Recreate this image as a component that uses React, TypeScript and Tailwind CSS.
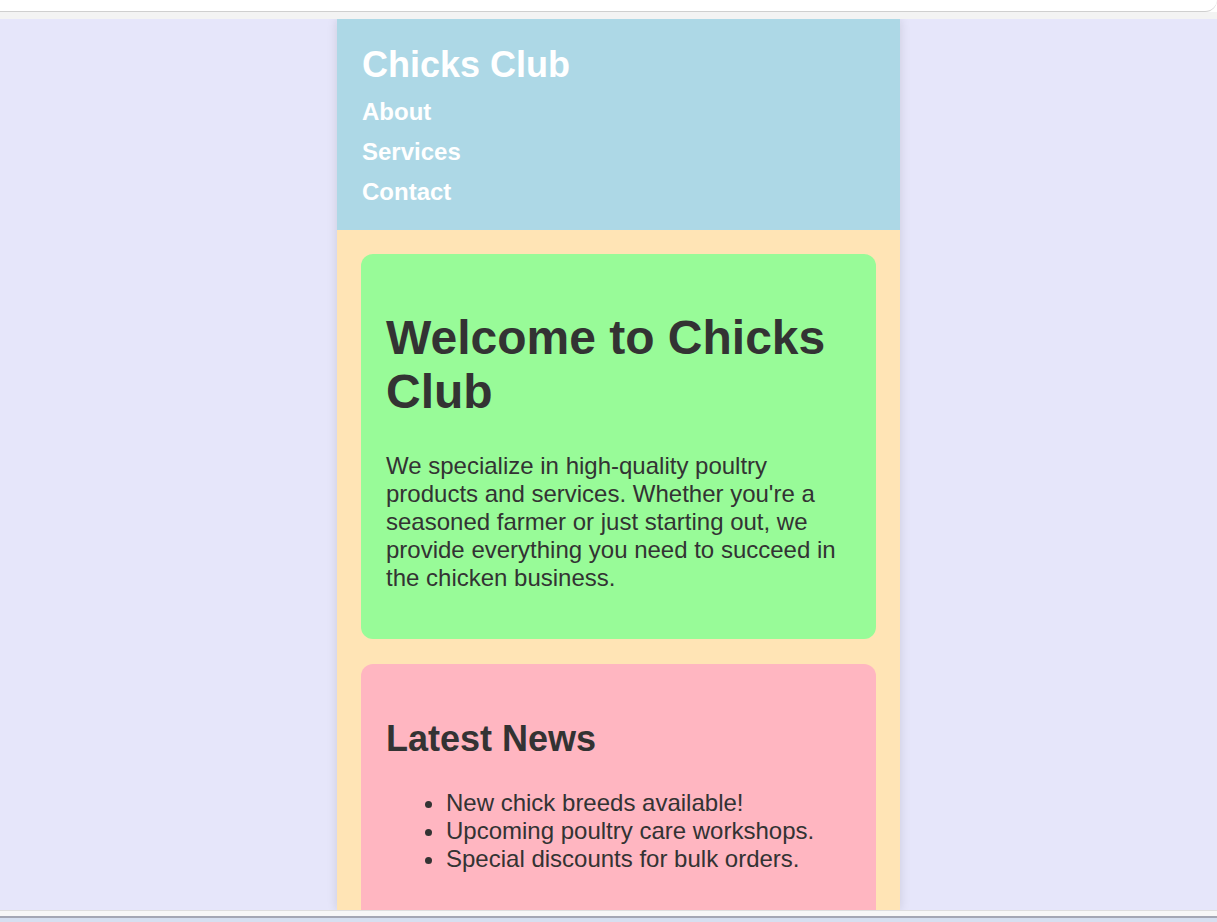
import React from "react";

export default function App() {
  return (
    <div className="h-[922px] w-full flex flex-col overflow-hidden font-['Liberation_Sans',Arial,sans-serif]">
      <div className="h-[12px] shrink-0 bg-white border-b border-[#cfcfcf] rounded-br-[14px]" />
      <div className="h-[7px] shrink-0 bg-[#f3f3f3]" />
      <div className="h-[891px] shrink-0 bg-[#e6e6fa] overflow-hidden flex justify-center pl-[20px]">
        <div className="w-[563px] h-full flex flex-col shadow-[0_0_10px_rgba(0,0,0,0.12)]">
          <header className="bg-[#add8e6] pl-[25px] pr-[23px] pt-[25px] pb-[18px] text-white">
            <h1 className="text-[36px] leading-[41px] font-bold">Chicks Club</h1>
            <nav className="mt-[7px] flex flex-col">
              <a className="text-[24px] leading-[40px] font-bold">About</a>
              <a className="text-[24px] leading-[40px] font-bold">Services</a>
              <a className="text-[24px] leading-[40px] font-bold">Contact</a>
            </nav>
          </header>
          <main className="flex-1 bg-[#ffe4b5] px-[24px] pt-[24px] text-[#333333]">
            <section className="bg-[#98fb98] rounded-[12px] pl-[25px] pr-[23px] pt-[24px] pb-[24px]">
              <h2 className="mt-[33px] text-[48px] leading-[54px] font-bold">Welcome to Chicks Club</h2>
              <p className="mt-[33px] mb-[23px] text-[24px] leading-[28px]">
                We specialize in high-quality poultry products and services. Whether you're a seasoned farmer or just starting out, we provide everything you need to succeed in the chicken business.
              </p>
            </section>
            <section className="mt-[25px] bg-[#ffb6c1] rounded-[12px] pl-[25px] pr-[23px] pt-[24px] pb-[24px]">
              <h3 className="mt-[31px] text-[36px] leading-[40px] font-bold">Latest News</h3>
              <ul className="mt-[30px] mb-[24px] pl-[60px] list-disc text-[24px] leading-[28px]">
                <li>New chick breeds available!</li>
                <li>Upcoming poultry care workshops.</li>
                <li>Special discounts for bulk orders.</li>
              </ul>
            </section>
          </main>
        </div>
      </div>
      <div className="h-[1px] shrink-0 bg-[#dedede]" />
      <div className="h-[5px] shrink-0 bg-[#f7f7f7]" />
      <div className="h-[2px] shrink-0 bg-[#a4a7b4]" />
      <div className="h-[4px] shrink-0 bg-[#d6dff0]" />
    </div>
  );
}
